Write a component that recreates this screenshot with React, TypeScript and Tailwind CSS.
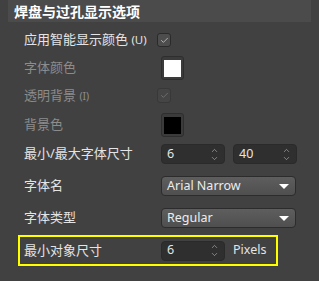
import { ChevronUp, ChevronDown, Check } from "lucide-react"

const font = { fontFamily: '"Noto Sans", "Noto Sans CJK SC", sans-serif' }

function Spin({ value }: { value: string }) {
  return (
    <div className="flex h-[20px] w-[64px] items-center justify-between rounded-[4px] border border-[#2a2a2a] bg-[#2f2f2f] pl-[5px] pr-[4px] text-[12.5px] text-[#e6e6e6]">
      <span>{value}</span>
      <div className="flex flex-col items-center leading-none text-[#c4c4c4]">
        <ChevronUp className="-mb-[1px] h-[9px] w-[11px]" strokeWidth={1.5} />
        <ChevronDown className="h-[9px] w-[11px]" strokeWidth={1.5} />
      </div>
    </div>
  )
}

function Dropdown({ value }: { value: string }) {
  return (
    <div className="flex h-[20px] w-[135px] items-center justify-between rounded-[4px] border border-[#2c2c2c] bg-gradient-to-b from-[#5e5e5e] to-[#4f4f4f] pl-[5px] pr-[6px] text-[12.5px] text-[#ececec]">
      <span>{value}</span>
      <div className="h-0 w-0 border-x-[5px] border-t-[5px] border-x-transparent border-t-white" />
    </div>
  )
}

function Swatch({ color }: { color: string }) {
  return (
    <div className="ml-[161px] flex h-[24px] w-[23px] items-center justify-center rounded-[3px] border border-[#2e2e2e] bg-[#3b3b3b]">
      <div className={`h-[17px] w-[17px] ${color}`} />
    </div>
  )
}

function Label({ text, dim }: { text: React.ReactNode; dim?: boolean }) {
  return (
    <span className={`absolute left-[24px] whitespace-nowrap text-[13px] ${dim ? "text-[#8c8c8c]" : "text-[#e4e4e4]"}`}>
      {text}
    </span>
  )
}

export default function App() {
  return (
    <div className="h-[281px] w-[319px] overflow-hidden bg-[#414141]" style={font}>
      {/* header */}
      <div className="mx-[8px] flex h-[22px] w-[303px] items-center bg-[#4b4b4b] pl-[6px] text-[14px] font-bold text-white">
        焊盘与过孔显示选项
      </div>

      {/* 应用智能显示颜色 */}
      <div className="relative mt-[11px] flex h-[14px] items-center">
        <Label text={<>应用智能显示颜色 <span className="text-[11.5px]">(U)</span></>} />
        <div className="ml-[157px] flex h-[14px] w-[14px] items-center justify-center rounded-[3px] border border-[#2a2a2a] bg-[#4d4d4d]">
          <Check className="h-[9px] w-[9px] text-[#d0d0d0]" strokeWidth={2} />
        </div>
      </div>

      {/* 字体颜色 */}
      <div className="relative mt-[9px] flex h-[24px] items-center">
        <Label text="字体颜色" dim />
        <Swatch color="bg-white" />
      </div>

      {/* 透明背景 */}
      <div className="relative mt-[8px] flex h-[15px] items-center">
        <Label text={<>透明背景 <span className="text-[10.5px]">(I)</span></>} dim />
        <div className="ml-[157px] flex h-[15px] w-[14px] items-center justify-center rounded-[3px] border border-[#383838] bg-[#454545]">
          <Check className="h-[9px] w-[9px] text-[#7a7a7a]" strokeWidth={2} />
        </div>
      </div>

      {/* 背景色 */}
      <div className="relative mt-[10px] flex h-[24px] items-center">
        <Label text="背景色" dim />
        <Swatch color="bg-black" />
      </div>

      {/* 最小/最大字体尺寸 */}
      <div className="relative mt-[7px] flex h-[20px] items-center">
        <Label text="最小/最大字体尺寸" />
        <div className="ml-[161px] flex gap-[8px]">
          <Spin value="6" />
          <Spin value="40" />
        </div>
      </div>

      {/* 字体名 */}
      <div className="relative mt-[12px] flex h-[20px] items-center">
        <Label text="字体名" />
        <div className="ml-[161px]">
          <Dropdown value="Arial Narrow" />
        </div>
      </div>

      {/* 字体类型 */}
      <div className="relative mt-[12px] flex h-[20px] items-center">
        <Label text="字体类型" />
        <div className="ml-[161px]">
          <Dropdown value="Regular" />
        </div>
      </div>

      {/* 最小对象尺寸 */}
      <div className="relative ml-[18px] mt-[7px] flex h-[31px] w-[260px] items-center border-2 border-[#ffff00]">
        <span className="absolute left-[4px] whitespace-nowrap text-[13px] text-[#e4e4e4]">最小对象尺寸</span>
        <div className="ml-[141px] flex items-center gap-[8px]">
          <Spin value="6" />
          <span className="text-[12.5px] text-[#e4e4e4]">Pixels</span>
        </div>
      </div>
    </div>
  )
}
